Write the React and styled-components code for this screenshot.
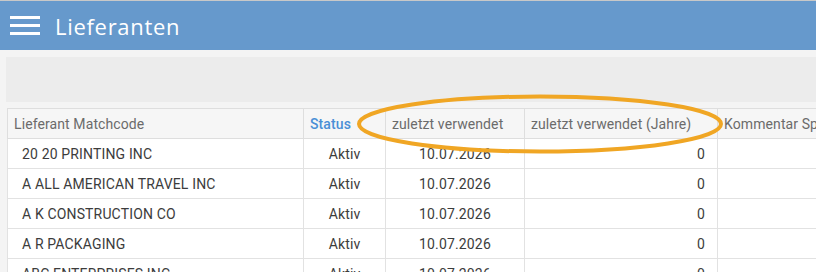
import styled, { createGlobalStyle } from 'styled-components';

const GlobalStyle = createGlobalStyle`
  body {
    margin: 0;
    background: #f4f4f4;
    font-family: Roboto, "Liberation Sans", sans-serif;
    overflow: hidden;
  }
`

const TopBar = styled.header`
  height: 49px;
  border-top: 1px solid #c8c8c8;
  background: #6699cc;
  display: flex;
  align-items: center;
  padding-left: 10px;
  gap: 15px;
`

const Burger = styled.div`
  width: 30px;
  display: flex;
  flex-direction: column;
  gap: 5px;

  > span {
    display: block;
    height: 3px;
    background: #fff;
  }
`

const Title = styled.h1`
  margin: 0;
  font-family: "Open Sans", sans-serif;
  font-weight: 400;
  font-size: 22px;
  color: #fff;
  letter-spacing: 0.7px;
`

const Content = styled.main`
  padding: 7px 0 0 6px;
  position: relative;
`

const Toolbar = styled.div`
  height: 45px;
  background: #ececec;
`

const TableWrap = styled.div`
  margin-top: 6px;
  margin-left: 1px;
  overflow: hidden;
`

const Table = styled.table`
  width: 1000px;
  table-layout: fixed;
  border-collapse: collapse;
  font-size: 14px;
  background: #fff;
`

const Th = styled.th`
  height: 29px;
  padding: 0 6px;
  text-align: left;
  white-space: nowrap;
  overflow: hidden;
  background: #f6f6f6;
  letter-spacing: 0.1px;
  color: ${(props) => (props.active ? '#4a8fd6' : '#6b6b6b')};
  font-weight: ${(props) => (props.active ? 500 : 400)};
  border: 1px solid #dedede;
`

const Td = styled.td`
  height: 29px;
  padding: 0 ${(props) => (props.align === 'left' ? '14px' : '12px')};
  text-align: ${(props) => props.align || 'left'};
  color: #3c3c3c;
  letter-spacing: 0.15px;
  white-space: nowrap;
  border: 1px solid #e2e2e2;
`

const Ellipse = styled.svg`
  position: absolute;
  left: 356px;
  top: 44px;
  pointer-events: none;
`

const rows = [
  '20 20 PRINTING INC',
  'A ALL AMERICAN TRAVEL INC',
  'A K CONSTRUCTION CO',
  'A R PACKAGING',
  'ABC ENTERPRISES INC',
]

const App = () => {
  return (
    <>
      <GlobalStyle />
      <TopBar>
        <Burger>
          <span />
          <span />
          <span />
        </Burger>
        <Title>Lieferanten</Title>
      </TopBar>
      <Content>
        <Toolbar />
        <TableWrap>
          <Table>
            <colgroup>
              <col style={{ width: 296 }} />
              <col style={{ width: 82 }} />
              <col style={{ width: 139 }} />
              <col style={{ width: 193 }} />
              <col style={{ width: 290 }} />
            </colgroup>
            <thead>
              <tr>
                <Th>Lieferant Matchcode</Th>
                <Th active>Status</Th>
                <Th>zuletzt verwendet</Th>
                <Th>zuletzt verwendet (Jahre)</Th>
                <Th>Kommentar Sperre</Th>
              </tr>
            </thead>
            <tbody>
              {rows.map((name) => (
                <tr key={name}>
                  <Td align="left">{name}</Td>
                  <Td align="center">Aktiv</Td>
                  <Td align="center">10.07.2026</Td>
                  <Td align="right">0</Td>
                  <Td />
                </tr>
              ))}
            </tbody>
          </Table>
        </TableWrap>
        <Ellipse width="372" height="64" viewBox="0 0 372 64">
          <ellipse cx="184" cy="30" rx="181" ry="27.5" fill="none" stroke="#f0a624" strokeWidth="4" />
        </Ellipse>
      </Content>
    </>
  );
};

export default App;
